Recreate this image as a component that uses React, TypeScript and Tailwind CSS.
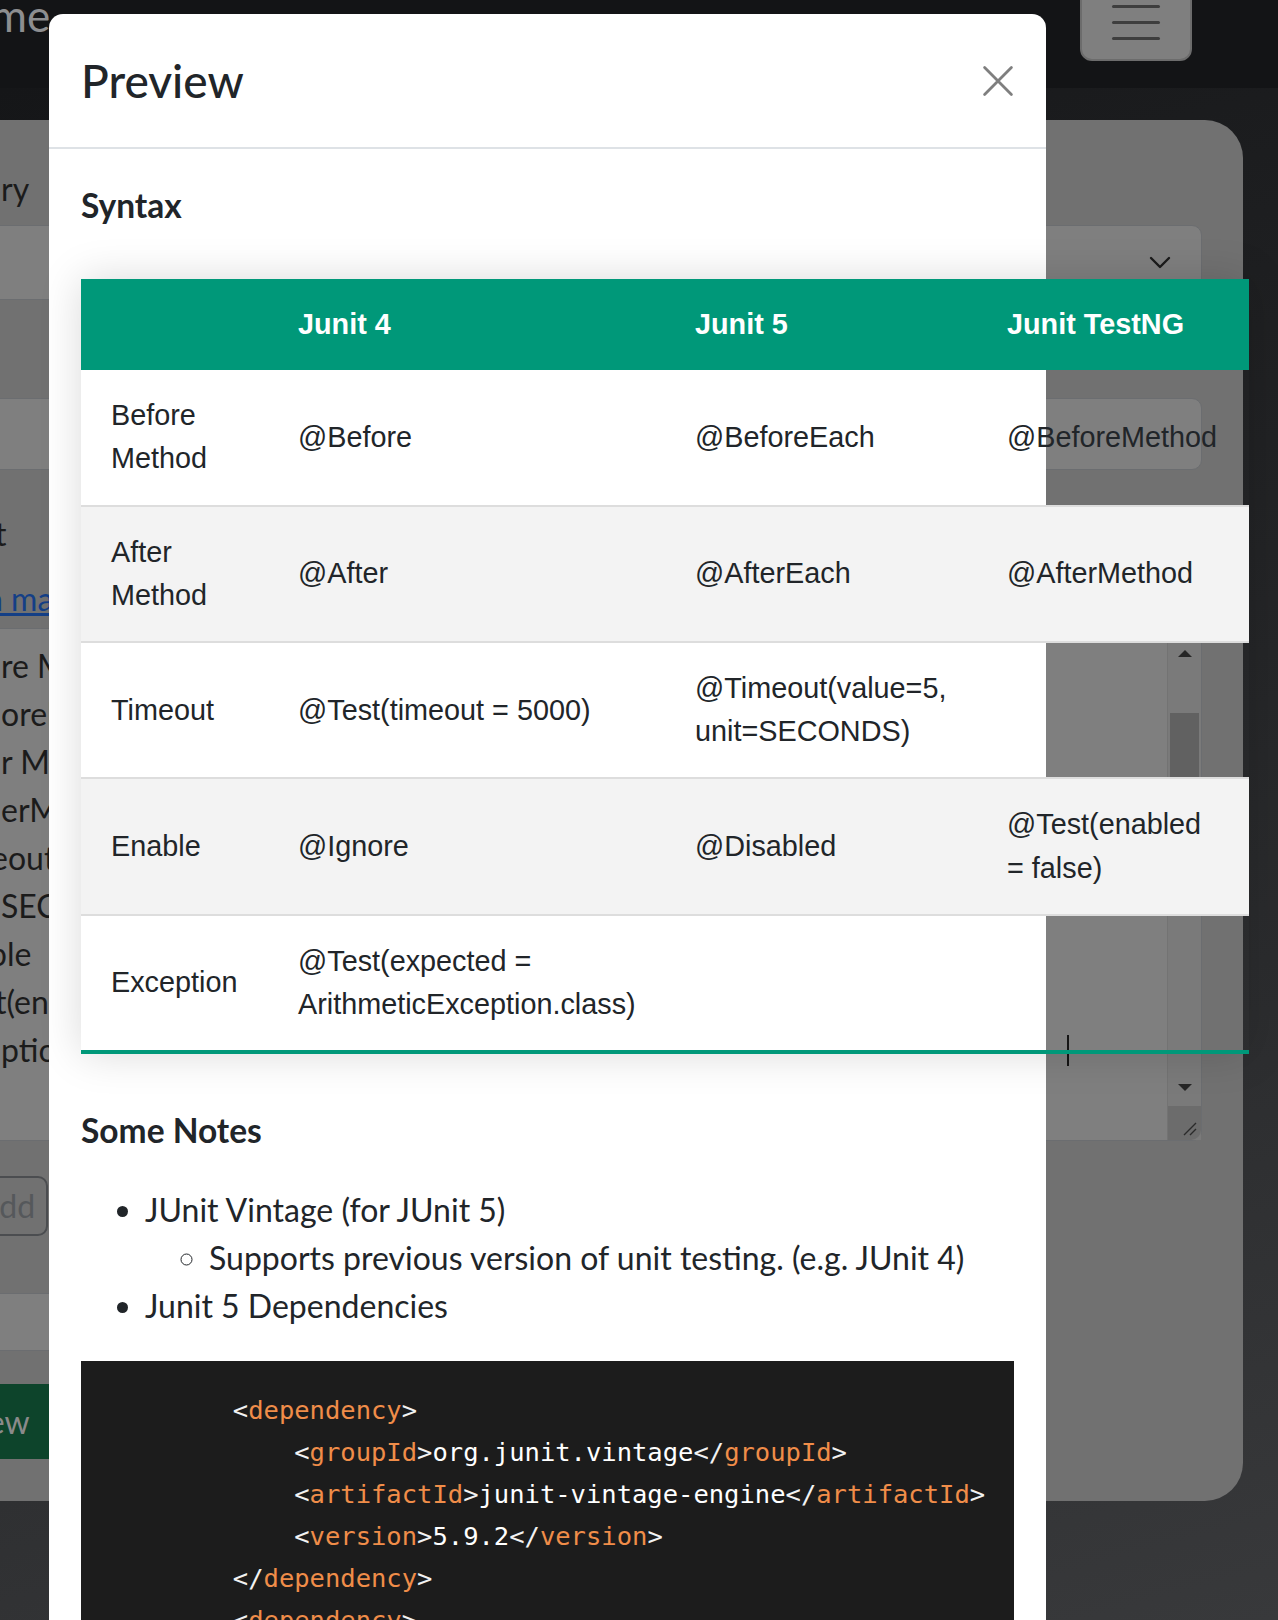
import React from "react";

const SANS = "font-['Lato','Noto_Sans',sans-serif]";
const ARIAL = "font-['Liberation_Sans',Arial,sans-serif]";
const MONO = "font-['DejaVu_Sans_Mono','Liberation_Mono',monospace]";

type Row = { label: string; j4: string; j5: string; ng: string };

const rows: Row[] = [
  { label: "Before Method", j4: "@Before", j5: "@BeforeEach", ng: "@BeforeMethod" },
  { label: "After Method", j4: "@After", j5: "@AfterEach", ng: "@AfterMethod" },
  { label: "Timeout", j4: "@Test(timeout = 5000)", j5: "@Timeout(value=5, unit=SECONDS)", ng: "" },
  { label: "Enable", j4: "@Ignore", j5: "@Disabled", ng: "@Test(enabled = false)" },
  { label: "Exception", j4: "@Test(expected = ArithmeticException.class)", j5: "", ng: "" },
];

// what peeks out from the page behind the modal (left edge of the textarea)
const behindLines = [
  { text: "re Method", cls: "" },
  { text: "oreMethod", cls: "" },
  { text: "r Method", cls: "" },
  { text: "erMethod", cls: "" },
  { text: "eout", cls: "-ml-[10px]" },
  { text: "SECONDS)", cls: "" },
  { text: "ble", cls: "-ml-[12px]" },
  { text: "t(enabled", cls: "-ml-[6px]" },
];

const Tag = ({ name, close }: { name: string; close?: boolean }) => (
  <>
    <span className="text-[#f2f2f2]">{close ? "</" : "<"}</span>
    <span className="text-[#f08d49]">{name}</span>
    <span className="text-[#f2f2f2]">{">"}</span>
  </>
);

const codeLines: React.ReactNode[] = [
  <>{"        "}<Tag name="dependency" /></>,
  <>{"            "}<Tag name="groupId" />org.junit.vintage<Tag name="groupId" close /></>,
  <>{"            "}<Tag name="artifactId" />junit-vintage-engine<Tag name="artifactId" close /></>,
  <>{"            "}<Tag name="version" />5.9.2<Tag name="version" close /></>,
  <>{"        "}<Tag name="dependency" close /></>,
  <>{"        "}<Tag name="dependency" /></>,
  <>{"            "}<Tag name="groupId" />org.junit.jupiter<Tag name="groupId" close /></>,
];

const Arrow = ({ down }: { down?: boolean }) => (
  <svg width="16" height="9" viewBox="0 0 16 9">
    <polygon points={down ? "1,1 15,1 8,8" : "1,8 15,8 8,1"} fill="#262626" />
  </svg>
);

const BehindPage = () => (
  <div className={`${SANS} flex flex-col`}>
    <header className="flex h-[88px] items-start justify-between bg-[#131416]">
      <span className="-ml-[67px] -mt-[7px] text-[44px] leading-none text-[#8d8e90]">Home</span>
      <div className="mr-[86px] -mt-[14px] flex h-[75px] w-[112px] flex-col items-center gap-[13px] rounded-[12px] border-2 border-[#6c6c6c] bg-[#7f7f7f] pt-[17px]">
        <div className="h-[3px] w-[48px] rounded bg-[#3e3e3e]" />
        <div className="h-[3px] w-[48px] rounded bg-[#3e3e3e]" />
        <div className="h-[3px] w-[48px] rounded bg-[#3e3e3e]" />
      </div>
    </header>
    <div className="h-[1532px] bg-[linear-gradient(165deg,#151618_0%,#222325_40%,#38393b_100%)] pt-[32px]">
      <div className="flex h-[1381px] w-[1243px] flex-col rounded-r-[38px] bg-[#717171] pr-[41px] pt-[45px] text-[32px] leading-[48px] text-[#1b1b1b]">
        <span className="ml-[1px]">ry</span>
        <div className="-ml-[40px] mt-[12px] flex h-[75px] items-center justify-end rounded-[10px] border border-[#6b6d70] bg-[#7f7f7f] pr-[30px]">
          <svg width="22" height="13" viewBox="0 0 22 13" fill="none" stroke="#1b1b1b" strokeWidth="2.4" strokeLinecap="round" strokeLinejoin="round">
            <path d="M2 2l9 9 9-9" />
          </svg>
        </div>
        <div className="-ml-[40px] mt-[98px] h-[72px] rounded-[10px] border border-[#6b6d70] bg-[#7f7f7f]" />
        <span className="-ml-[5px] mt-[40px]">t</span>
        <span className="-ml-[13px] mt-[17px] text-[#143f86] underline">a markdown</span>
        <div className="-ml-[40px] mt-[5px] flex h-[513px] rounded-[10px] border border-[#6b6d70] bg-[#7f7f7f]">
          <div className="flex flex-1 flex-col pl-[40px] pt-[13px]">
            {behindLines.map((l, i) => (
              <span key={i} className={l.cls}>{l.text}</span>
            ))}
            <div className="flex items-center justify-between">
              <span>ption</span>
              <span className="mr-[98px] h-[31px] w-[2px] bg-[#151515]" />
            </div>
          </div>
          <div className="flex w-[34px] flex-col border-l border-[#737373] bg-[#7a7a7a]">
            <div className="flex h-[46px] items-center justify-center pt-[2px]">
              <Arrow />
            </div>
            <div className="flex-1">
              <div className="mx-[2px] mt-[38px] h-[64px] bg-[#616161]" />
            </div>
            <div className="flex h-[37px] items-center justify-center">
              <Arrow down />
            </div>
            <div className="flex h-[34px] items-end justify-end rounded-br-[10px] bg-[#6c6c6c] pb-[4px] pr-[4px]">
              <svg width="16" height="16" viewBox="0 0 16 16" stroke="#2a2a2a" strokeWidth="1.4">
                <path d="M15 3L3 15M15 9L9 15" />
              </svg>
            </div>
          </div>
        </div>
        <div className="-ml-[60px] mt-[35px] flex h-[60px] w-[108px] items-center rounded-[10px] border-2 border-[#4b4d50] pl-[36px] text-[#55585b]">
          Add
        </div>
        <div className="-ml-[40px] mt-[57px] h-[58px] w-[400px] rounded-[10px] border border-[#6b6d70] bg-[#7f7f7f]" />
        <div className="-ml-[110px] mt-[33px] flex h-[75px] w-[200px] items-center rounded-[14px] bg-[#0d442b] pl-[27px] text-[#8a8a8a]">
          Preview
        </div>
      </div>
    </div>
  </div>
);

export default function App() {
  return (
    <div className="relative h-[1620px] w-[1278px] overflow-hidden bg-[#2c2d2f]">
      <BehindPage />

      {/* modal dialog */}
      <div className="absolute left-[49px] top-[14px] w-[997px] rounded-t-[14px] bg-white text-[#212529]">
        <div className="flex items-center justify-between border-b-2 border-[#dee2e6] p-[32px]">
          <h5 className={`${SANS} text-[46px] font-medium leading-[69px]`}>Preview</h5>
          <svg className="h-[32px] w-[32px]" viewBox="0 0 16 16" fill="none" stroke="#7f7f7f" strokeWidth="1.4" strokeLinecap="round">
            <path d="M1.3 1.3L14.7 14.7M14.7 1.3L1.3 14.7" />
          </svg>
        </div>

        <div className={`${SANS} p-[32px] text-[32px] leading-[48px]`}>
          <p className="text-[33.5px] font-bold">Syntax</p>

          <table className={`${ARIAL} mt-[50px] w-[1168px] table-fixed border-collapse text-left text-[28.8px] leading-[1.5] shadow-[0_0_40px_rgba(0,0,0,0.15)]`}>
            <colgroup>
              <col className="w-[187px]" />
              <col className="w-[397px]" />
              <col className="w-[312px]" />
              <col className="w-[272px]" />
            </colgroup>
            <thead>
              <tr className="bg-[#009879] text-white">
                <th className="px-[30px] py-[24px] font-bold"></th>
                <th className="px-[30px] py-[24px] font-bold">Junit 4</th>
                <th className="px-[30px] py-[24px] font-bold">Junit 5</th>
                <th className="px-[30px] py-[24px] font-bold">Junit TestNG</th>
              </tr>
            </thead>
            <tbody>
              {rows.map((r, i) => {
                const last = i === rows.length - 1;
                const rowCls = last
                  ? "border-b-4 border-[#009879]"
                  : i % 2 === 1
                  ? "border-b-2 border-[#dddddd] bg-[#f3f3f3]"
                  : "border-b-2 border-[#dddddd]";
                return (
                  <tr key={r.label} className={rowCls}>
                    <td className="px-[30px] py-[24px] align-middle">{r.label}</td>
                    <td className="px-[30px] py-[24px] align-middle">{r.j4}</td>
                    <td className="px-[30px] py-[24px] align-middle">{r.j5}</td>
                    <td className="px-[30px] py-[24px] align-middle">{r.ng}</td>
                  </tr>
                );
              })}
            </tbody>
          </table>

          <p className="mt-[52px] text-[33.5px] font-bold">Some Notes</p>
          <ul className="mt-[32px] list-disc pl-[64px]">
            <li>
              JUnit Vintage (for JUnit 5)
              <ul className="list-[circle] pl-[64px]">
                <li>Supports previous version of unit testing. (e.g. JUnit 4)</li>
              </ul>
            </li>
            <li>Junit 5 Dependencies</li>
          </ul>

          <pre className={`${MONO} mt-[31px] bg-[#1c1c1c] pb-[40px] pl-[29px] pt-[28px] text-[25.5px] leading-[42px] text-white`}>
            {codeLines.map((l, i) => (
              <div key={i}>{l}</div>
            ))}
          </pre>
        </div>
      </div>
    </div>
  );
}
